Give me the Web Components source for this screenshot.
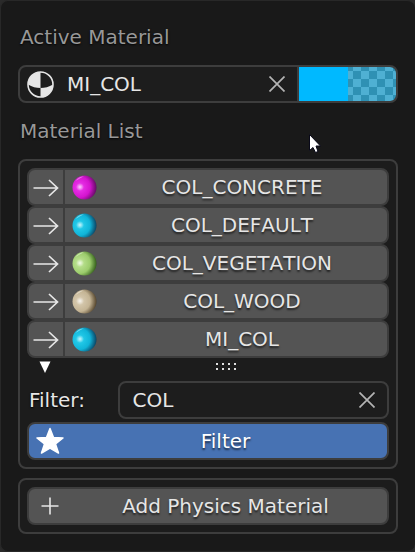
<!DOCTYPE html>
<html lang="en">
<head>
<meta charset="utf-8">
<title>Material List</title>
<style>
  html { background: #2a2a2a; }
  body { margin: 0; font-family: "DejaVu Sans", sans-serif; font-size: 20px; line-height: 24px; color: #e6e6e6; }
</style>
</head>
<body>
<material-panel></material-panel>
<script>
const control = `
  :host, *, *::before { box-sizing: border-box; }
  button, input { font: inherit; color: inherit; margin: 0; }
  button { cursor: default; }
  svg { display: block; }
`;
const define = (name, render) => customElements.define(name, class extends HTMLElement {
  constructor() {
    super();
    this.attachShadow({ mode: 'open' });
  }
  connectedCallback() {
    this.shadowRoot.innerHTML = `<style>${control}</style>` + render(this);
  }
});

define('section-label', () => `<style>
  :host { display: block; color: #989898; padding: 0 2px; text-shadow: 0 1px 2px #000; }
</style><slot></slot>`);

define('group-box', () => `<style>
  :host { display: flex; flex-direction: column; border: 2px solid #3d3d3d; border-radius: 8px; padding: 7px; background: #1c1c1c; }
</style><slot></slot>`);

define('clear-button', () => `<style>
  :host { display: flex; flex: none; }
  button { width: 41px; height: 34px; padding: 0; border: 0; background: none; display: grid; place-items: center; color: #b4b4b4; }
</style><button type="button" aria-label="Clear"><svg width="16" height="16" viewBox="0 0 16 16" fill="none" stroke="currentColor" stroke-width="1.700"><path d="M.5.5l15 15M15.500.5l-15 15"/></svg></button>`);

define('color-swatch', () => `<style>
  :host { display: flex; flex: none; width: 99px; border-left: 2px solid #3d3d3d; }
  button { flex: 1; display: flex; border: 0; padding: 0; background: none; border-radius: 0 6px 6px 0; overflow: hidden; }
  span { flex: 1; align-self: stretch; }
  .solid { background: #00b9ff; }
  .alpha { background: conic-gradient(#4fb0d3 25%, #2f91b4 0 50%, #4fb0d3 0 75%, #2f91b4 0) 5px 4px / 16px 16px; }
</style><button type="button" aria-label="Viewport colour"><span class="solid"></span><span class="alpha"></span></button>`);

define('material-field', el => `<style>
  :host { display: flex; height: 38px; border: 2px solid #3d3d3d; border-radius: 8px; background: #1d1d1d; }
  svg { flex: none; align-self: center; margin-left: 7px; }
  input { flex: 1; min-width: 0; border: 0; outline: 0; background: none; padding: 0 0 0 13px; }
</style>
<svg width="27" height="27" viewBox="0 0 27 27"><circle cx="13.500" cy="13.500" r="12.500" fill="none" stroke="#e6e6e6" stroke-width="1.600"/><path fill="#e6e6e6" d="M13.500 1A12.500 12.500 0 0 0 1 13.500Q7 17 13.500 17ZM13.500 17Q20 17 26 13.500A12.500 12.500 0 0 1 13.500 26Z"/></svg>
<input aria-label="Active Material" value="${el.getAttribute('value')}">
<clear-button></clear-button><color-swatch></color-swatch>`);

define('material-row', el => `<style>
  :host { display: flex; height: 38px; border: 2px solid #3d3d3d; border-radius: 8px; background: #545454; }
  button { border: 0; padding: 0; background: none; }
  .assign { flex: none; width: 36px; border-right: 2px solid #3d3d3d; display: grid; place-items: center; }
  .name { flex: 1; display: flex; align-items: center; padding-left: 7px; }
  .label { flex: 1; text-align: center; font-kerning: none; text-shadow: 0 2px 2px #0009; }
</style>
<button class="assign" type="button" aria-label="Assign"><svg width="26" height="20" viewBox="0 0 26 20" fill="none" stroke="#e6e6e6" stroke-width="1.700"><path d="M.5 11H24.500M16 3l8.500 8-8.500 8"/></svg></button>
<button class="name" type="button">
<svg width="25" height="25" viewBox="0 0 25 25"><defs>
<radialGradient id="g" cx=".3" cy=".48" r=".72"><stop offset="0" stop-color="${el.getAttribute('light')}"/><stop offset=".6" stop-color="${el.getAttribute('mid')}"/><stop offset="1" stop-color="${el.getAttribute('dark')}"/></radialGradient>
<radialGradient id="h"><stop offset="0" stop-color="#fff" stop-opacity=".75"/><stop offset="1" stop-color="#fff" stop-opacity="0"/></radialGradient></defs>
<circle cx="12.500" cy="12.500" r="12" fill="url(#g)"/><circle cx="8" cy="12" r="4" fill="url(#h)"/><path d="M3.500 6Q7 1.500 12 1.200Q8 3 3.500 6Z" fill="#fff" opacity=".45"/></svg>
<span class="label"><slot></slot></span></button>`);

define('list-footer', () => `<style>
  :host { display: grid; grid-template-columns: 1fr auto 1fr; align-items: start; height: 23px; padding: 3px 12px 0; }
  button { border: 0; background: none; padding: 0; justify-self: start; }
</style>
<button type="button" aria-label="Show filter"><svg width="12" height="12" viewBox="0 0 12 12"><path fill="#fff" d="M.5.5h11L6 12z"/></svg></button>
<svg width="56" height="12" viewBox="0 0 56 12"><path fill="#e0e0e0" d="M36 2h2v2h-2zM42 2h2v2h-2zM48 2h2v2h-2zM54 2h2v2h-2zM36 7h2v2h-2zM42 7h2v2h-2zM48 7h2v2h-2zM54 7h2v2h-2z"/></svg>`);

define('filter-field', () => `<style>
  :host { display: grid; grid-template-columns: 1fr 3fr; align-items: center; }
  label { padding-left: 2px; text-shadow: 0 1px 2px #000; }
  .box { min-width: 0; display: flex; height: 38px; border: 2px solid #3d3d3d; border-radius: 8px; background: #1d1d1d; }
  input { flex: 1; min-width: 0; border: 0; outline: 0; background: none; padding: 0 0 0 13px; }
</style><label for="f">Filter:</label><div class="box"><input id="f" value="COL"><clear-button></clear-button></div>`);

define('icon-button', () => `<style>
  :host { display: flex; }
  button { flex: 1; height: 38px; display: flex; align-items: center; border: 2px solid #3d3d3d; border-radius: 8px; padding: 0 0 0 7px; background: #545454; }
  :host([primary]) button { background: #4772b3; color: #fff; }
  .icon { flex: none; width: 28px; display: grid; place-items: center; }
  .label { flex: 1; text-align: center; text-shadow: 0 2px 2px #0009; }
</style><button type="button"><span class="icon"><slot name="icon"></slot></span><span class="label"><slot></slot></span></button>`);

define('material-panel', () => `<style>
  :host { display: flex; flex-direction: column; min-height: 100vh; padding: 24px 17px 17px; border: solid #282828; border-width: 1px 0 1px 1px; border-radius: 8px; background: #191919; }
  material-field { margin: 16px 0; }
  .list { margin-top: 16px; }
  .add { margin-top: 9px; }
  icon-button[primary] { margin-top: 3px; }
  .cursor { position: absolute; left: 309px; top: 134px; }
</style>
<section-label>Active Material</section-label>
<material-field value="MI_COL"></material-field>
<section-label>Material List</section-label>
<group-box class="list">
  <material-row light="#f03cf0" mid="#d414cf" dark="#5c0a5c">COL_CONCRETE</material-row>
  <material-row light="#2cd4f0" mid="#10b4d8" dark="#0a3c5c">COL_DEFAULT</material-row>
  <material-row light="#c4e89c" mid="#9ccc6c" dark="#2c5814">COL_VEGETATION</material-row>
  <material-row light="#dcd0b8" mid="#c4b494" dark="#4c3c24">COL_WOOD</material-row>
  <material-row light="#2cd4f0" mid="#10b4d8" dark="#0a3c5c">MI_COL</material-row>
  <list-footer></list-footer>
  <filter-field></filter-field>
  <icon-button primary>
    <svg slot="icon" width="28" height="28" viewBox="0 0 28 28"><path fill="#fff" stroke="#fff" stroke-width="1.500" stroke-linejoin="round" d="M14 1.500L17.500 10.500L27 11L19.500 17L22.500 26L14 21L5.500 26L8.500 17L1 11L10.500 10.500Z"/></svg>
    Filter
  </icon-button>
</group-box>
<group-box class="add">
  <icon-button>
    <svg slot="icon" width="18" height="18" viewBox="0 0 18 18" fill="none" stroke="#e6e6e6" stroke-width="1.600"><path d="M9 .5v17M.5 9h17"/></svg>
    Add Physics Material
  </icon-button>
</group-box>
<svg class="cursor" width="12" height="19" viewBox="0 0 12 19"><path fill="#fff" stroke="#080818" stroke-width="1" d="M.5.500V16.500L4 13.500L6.500 18.500L9 17.500L7 12H11.500Z"/></svg>`);
</script>
</body>
</html>
